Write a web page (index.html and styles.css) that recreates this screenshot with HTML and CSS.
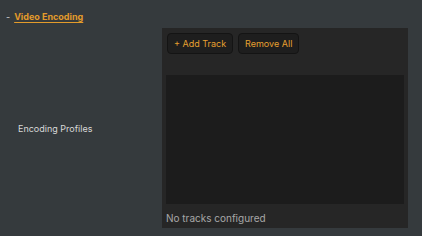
FILE: index.html
```html
<!DOCTYPE html>
<html>
<head>
<meta charset="utf-8">
<link rel="stylesheet" href="styles.css">
</head>
<body>
<div class="page">
  <div class="section-head">
    <span class="dash">-</span>
    <a class="section-link">Video Encoding</a>
  </div>
  <div class="row">
    <div class="label">Encoding Profiles</div>
    <div class="panel">
      <div class="toolbar">
        <button class="btn">+ Add Track</button>
        <button class="btn">Remove All</button>
      </div>
      <div class="list"></div>
      <div class="status">No tracks configured</div>
    </div>
  </div>
</div>
</body>
</html>
```

FILE: styles.css
```css
html, body {
  margin: 0;
  padding: 0;
  background: #353a3d;
  font-family: Inter, "Noto Sans", sans-serif;
}
.page {
  width: 422px;
  height: 236px;
  box-sizing: border-box;
  padding-top: 9px;
}
.section-head {
  display: flex;
  align-items: center;
  gap: 4px;
  padding-left: 6px;
  height: 14px;
  font-size: 9px;
}
.dash {
  color: #d0d0d0;
}
.section-link {
  color: #e39b2b;
  font-weight: 700;
  text-decoration: underline;
  text-underline-offset: 2px;
}
.row {
  display: flex;
  margin-top: 5px;
}
.label {
  width: 162px;
  box-sizing: border-box;
  padding-left: 18px;
  display: flex;
  align-items: center;
  color: #d8d8d8;
  font-size: 9px;
}
.panel {
  width: 246px;
  height: 200px;
  background: #262626;
  box-sizing: border-box;
  padding: 5px 4px 0 4px;
  display: flex;
  flex-direction: column;
}
.toolbar {
  display: flex;
  gap: 5px;
  padding-left: 1px;
  height: 21px;
}
.btn {
  font-family: Inter, "Noto Sans", sans-serif;
  font-size: 9px;
  color: #e6a030;
  background: #1e1e1e;
  border: 1px solid #141414;
  border-radius: 4px;
  padding: 0 6px;
  height: 21px;
  margin: 0;
}
.list {
  margin-top: 21px;
  height: 129px;
  background: #1c1c1c;
}
.status {
  margin-top: 7px;
  color: #a8a8a8;
  font-size: 10px;
  line-height: 14px;
}
```
